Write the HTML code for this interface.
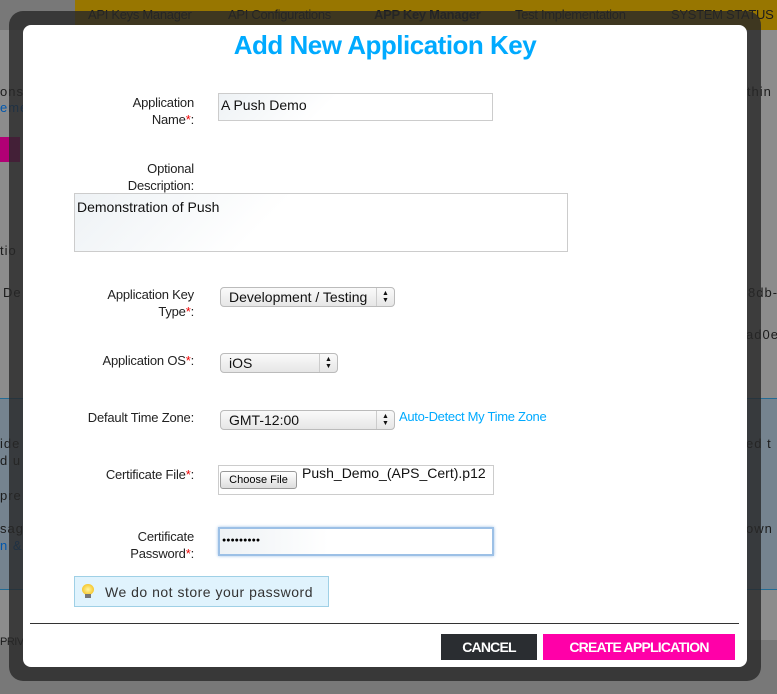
<!DOCTYPE html>
<html><head><meta charset="utf-8"><style>
*{margin:0;padding:0;box-sizing:border-box}
body{width:777px;height:694px;overflow:hidden;position:relative;background:#8e8e8e;font-family:"Liberation Sans",sans-serif}
.a{position:absolute}
.nav{left:75px;top:0;width:702px;height:30px;background:#b38b00;white-space:nowrap;overflow:hidden}
.nav span{position:absolute;top:7px;font-size:13px;color:#222;letter-spacing:-.3px}
.bgt{font-size:13px;color:#222;letter-spacing:1px;white-space:nowrap}
.frame{left:9px;top:11px;width:752px;height:670px;background:rgba(40,40,40,.8);border-radius:14px}
.modal{left:23px;top:25px;width:724px;height:642px;background:#fff;border-radius:8px}
.lbl{position:absolute;text-align:right;right:583px;font-size:13px;line-height:17px;color:#222;letter-spacing:-.2px}
.lbl b{color:#e00;font-weight:normal}
.inp{position:absolute;border:1px solid #ccc;background:linear-gradient(135deg,#eef2f5,#fff 40%);font-size:14px;color:#111;padding:3px 2px}
.sel{position:absolute;border:1px solid #bbb;border-radius:4px;background:linear-gradient(#fafafa,#e6e6e6);font-size:14px;color:#111;padding:1px 8px;height:20px}
.sel i{position:absolute;right:0;top:0;width:18px;height:18px;border-left:1px solid #ccc;font-style:normal;font-size:7px;line-height:7px;text-align:center;padding-top:2px}
</style></head><body>
<div class="a nav"><span style="left:13px">API Keys Manager</span><span style="left:153px">API Configurations</span><span style="left:299px;font-weight:bold">APP Key Manager</span><span style="left:440px">Test Implementation</span><span style="left:596px">SYSTEM STATUS</span></div>
<div class="a" style="left:0;top:30px;width:777px;height:610px;background:#a5a5a5"></div>
<div class="a" style="left:0;top:398px;width:777px;height:192px;background:#8a9aa8;border-top:1px solid #2a7fb0;border-bottom:1px solid #2a7fb0"></div>
<div class="a" style="left:0;top:137px;width:20px;height:25px;background:#d0008a"></div>
<div class="a bgt" style="left:0;top:84px">ons</div><div class="a bgt" style="left:0;top:100px;color:#06c">eme</div>
<div class="a bgt" style="left:0;top:243px">tio</div><div class="a bgt" style="left:3px;top:285px">De</div>
<div class="a bgt" style="left:0;top:436px">ide</div><div class="a bgt" style="left:0;top:453px">d u</div><div class="a bgt" style="left:0;top:488px">pre</div><div class="a bgt" style="left:0;top:521px">sag</div><div class="a bgt" style="left:0;top:538px;color:#06c">n &amp;</div>
<div class="a bgt" style="left:0;top:636px;font-size:11px;letter-spacing:-.5px">PRIVA</div>
<div class="a bgt" style="left:743px;top:84px">ithin</div><div class="a bgt" style="left:748px;top:285px">8db-</div><div class="a bgt" style="left:746px;top:327px">ad0e-</div><div class="a bgt" style="left:746px;top:436px">ed t</div><div class="a bgt" style="left:746px;top:521px">own</div>
<div class="a" style="left:0;top:0;width:777px;height:694px;background:rgba(0,0,0,.15)"></div>
<div class="a frame"></div>
<div class="a modal">
<div class="a" style="left:0;top:5px;width:724px;text-align:center;font-size:26px;font-weight:bold;color:#0af;letter-spacing:-.5px">Add New Application Key</div>
</div>
<div class="lbl" style="top:94px">Application<br>Name<b>*</b>:</div>
<div class="inp" style="left:218px;top:93px;width:275px;height:28px">A Push Demo</div>
<div class="lbl" style="top:160px">Optional<br>Description:</div>
<div class="inp" style="left:74px;top:193px;width:494px;height:59px;padding-top:5px">Demonstration of Push</div>
<div class="lbl" style="top:286px">Application Key<br>Type<b>*</b>:</div>
<div class="sel" style="left:220px;top:287px;width:175px">Development / Testing<i>▲<br>▼</i></div>
<div class="lbl" style="top:352px">Application OS<b>*</b>:</div>
<div class="sel" style="left:220px;top:353px;width:118px">iOS<i>▲<br>▼</i></div>
<div class="lbl" style="top:409px">Default Time Zone:</div>
<div class="sel" style="left:220px;top:410px;width:175px">GMT-12:00<i>▲<br>▼</i></div>
<div class="a" style="left:399px;top:409px;font-size:13px;color:#0af;letter-spacing:-.3px">Auto-Detect My Time Zone</div>
<div class="lbl" style="top:466px">Certificate File<b>*</b>:</div>
<div class="a" style="left:218px;top:465px;width:276px;height:30px;border:1px solid #ccc"></div>
<div class="a" style="left:220px;top:471px;width:77px;height:18px;border:1px solid #999;border-radius:3px;background:linear-gradient(#fff,#ddd);font-size:11px;text-align:center;line-height:16px">Choose File</div>
<div class="a" style="left:302px;top:465px;font-size:14px;color:#111">Push_Demo_(APS_Cert).p12</div>
<div class="lbl" style="top:528px">Certificate<br>Password<b>*</b>:</div>
<div class="a" style="left:218px;top:527px;width:276px;height:29px;border:2px solid #9cc0e6;box-shadow:0 0 3px #9cc0e6;background:linear-gradient(90deg,#eef2f5,#fff 40%);font-size:7px;padding:8px 2px;letter-spacing:0">●●●●●●●●●</div>
<div class="a" style="left:74px;top:576px;width:255px;height:31px;border:1px solid #9fd0e6;background:#e0f3fd;font-size:14px;color:#333;padding:7px 0 0 30px;letter-spacing:.5px">We do not store your password</div>
<div class="a" style="left:82px;top:584px;width:12px;height:11px;border-radius:50%;background:radial-gradient(#fff6a0,#f3b400)"></div>
<div class="a" style="left:85px;top:594px;width:6px;height:4px;background:#777"></div>
<div class="a" style="left:30px;top:623px;width:709px;height:1px;background:#333"></div>
<div class="a" style="left:441px;top:634px;width:96px;height:26px;background:#2a2d31;color:#fff;font-size:14px;font-weight:bold;text-align:center;line-height:26px;letter-spacing:-.8px">CANCEL</div>
<div class="a" style="left:543px;top:634px;width:192px;height:26px;background:#ff00a8;color:#fff;font-size:14px;font-weight:bold;text-align:center;line-height:26px;letter-spacing:-.8px">CREATE APPLICATION</div>
</body></html>
